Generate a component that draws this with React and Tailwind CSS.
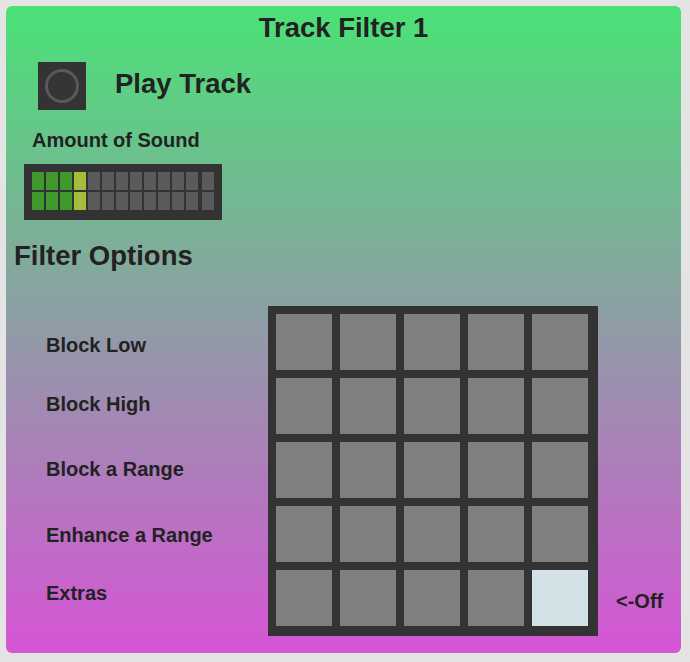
const labels = [
  { text: 'Block Low', gap: 'mt-0' },
  { text: 'Block High', gap: 'mt-[39px]' },
  { text: 'Block a Range', gap: 'mt-[45px]' },
  { text: 'Enhance a Range', gap: 'mt-[46px]' },
  { text: 'Extras', gap: 'mt-[38px]' },
];

// level meter: 4 lit cells (3 green, 1 yellow), rest dim
const meterColor = (i) => {
  if (i < 3) return 'bg-[#3f992b]';
  if (i === 3) return 'bg-[#a6bd3c]';
  return 'bg-[#5b5b5b]';
};

const MeterRow = () => (
  <div className="flex h-[18px]">
    <div className="flex gap-[2px]">
      {Array.from({ length: 12 }).map((_, i) => (
        <div key={i} className={`w-[12px] h-[18px] ${meterColor(i)}`} />
      ))}
    </div>
    <div className="ml-[4px] w-[12px] h-[18px] bg-[#5b5b5b]" />
  </div>
);

const App = () => {
  const cells = Array.from({ length: 25 });

  return (
    <div
      className="w-[690px] h-[662px] bg-[#e4e4e4] pt-[6px] pl-[6px] text-[#222]"
      style={{ fontFamily: '"Liberation Sans", Arial, Helvetica, sans-serif' }}
    >
      <div className="w-[675px] h-[647px] rounded-[6px] bg-[linear-gradient(to_bottom,#4ae276,#d655d6)] pt-[8px] font-bold">
        <h1 className="text-center text-[27.5px] leading-[28px] font-bold">Track Filter 1</h1>

        {/* play control */}
        <div className="flex items-start mt-[20px] pl-[32px]">
          <button className="w-[48px] h-[48px] bg-[#333] flex items-center justify-center">
            <div className="w-[34px] h-[34px] rounded-full border-[3.5px] border-[#595959] bg-[#353535]" />
          </button>
          <span className="ml-[29px] mt-[8px] text-[27.5px] leading-[28px]">Play Track</span>
        </div>

        <div className="mt-[20px] pl-[26px] text-[20px] leading-[20px]">Amount of Sound</div>

        <div className="mt-[14px] ml-[18px] w-[198px] h-[56px] bg-[#333] pt-[8px] pl-[8px] flex flex-col gap-[2px]">
          <MeterRow />
          <MeterRow />
        </div>

        <h2 className="mt-[22px] pl-[8px] text-[27.5px] leading-[28px] font-bold">Filter Options</h2>

        {/* filter matrix */}
        <div className="flex mt-[36px]">
          <div className="w-[262px] pl-[40px] pt-[29px] flex flex-col text-[20px] leading-[20px]">
            {labels.map((l) => (
              <div key={l.text} className={l.gap}>{l.text}</div>
            ))}
          </div>

          <div className="w-[330px] h-[330px] bg-[#333] pt-[8px] pl-[8px] grid grid-cols-[repeat(5,56px)] grid-rows-[repeat(5,56px)] gap-[8px]">
            {cells.map((_, i) => (
              <div key={i} className={i === 24 ? 'bg-[#d3e2e6]' : 'bg-[#808080]'} />
            ))}
          </div>

          <div className="self-end mb-[25px] ml-[18px] text-[20px] leading-[20px]">&lt;-Off</div>
        </div>
      </div>
    </div>
  );
};

export default App;
